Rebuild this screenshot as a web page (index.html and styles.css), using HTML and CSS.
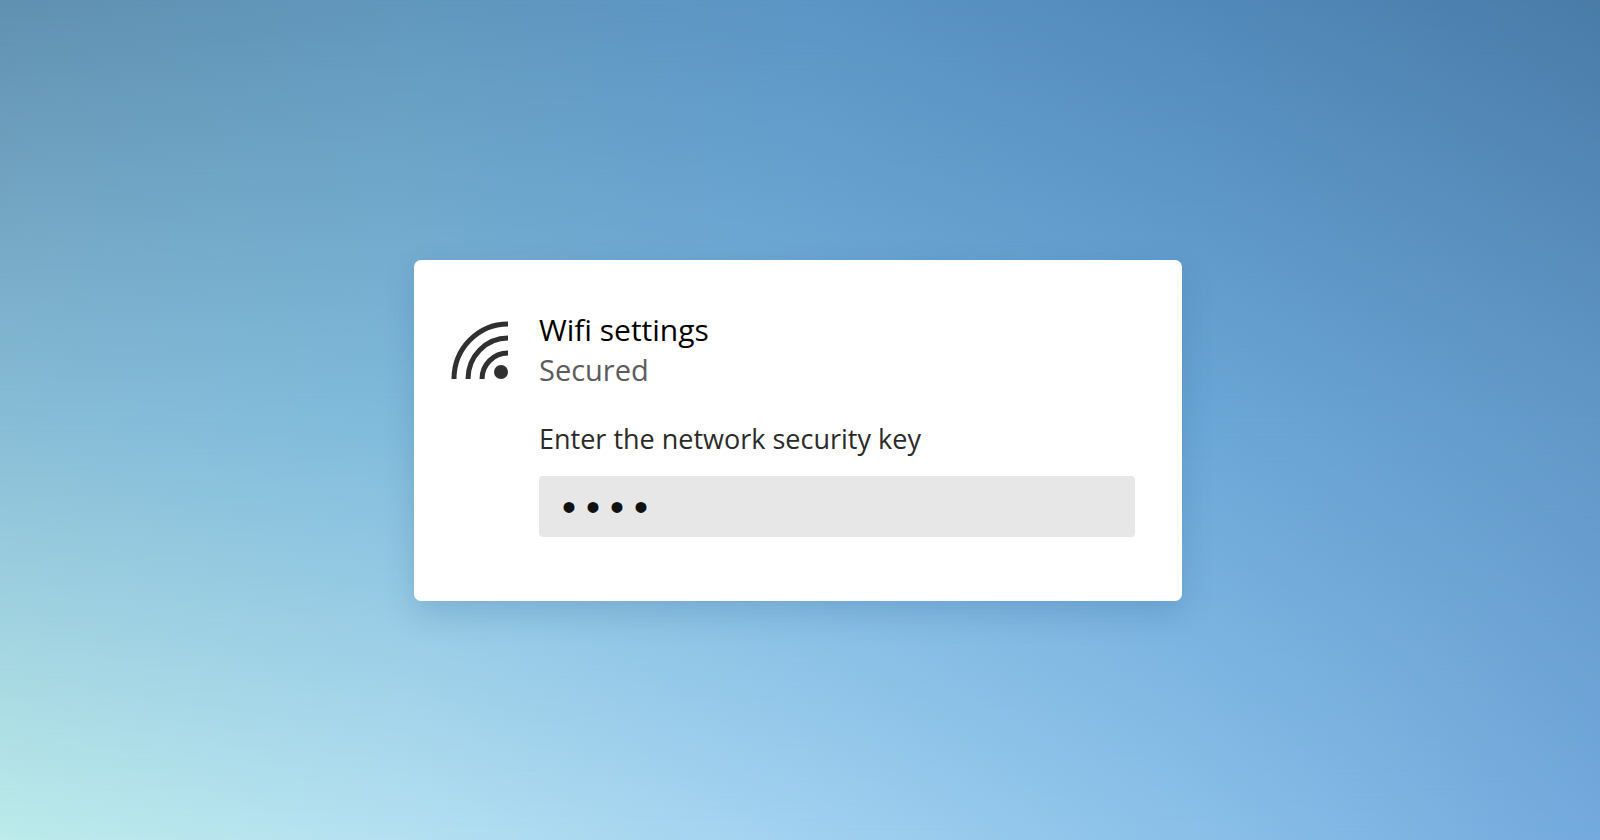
FILE: index.html
```html
<!DOCTYPE html>
<html lang="en">
<head>
    <meta charset="UTF-8">
    <meta name="viewport" content="width=device-width, initial-scale=1.0">
    <title>Wifi settings</title>
    <link rel="stylesheet" href="styles.css">
</head>
<body>
    <main class="desktop">
        <form class="wifi-card">
            <svg class="wifi-icon" viewBox="0 0 57 58" aria-hidden="true">
                <path d="M3 58 A54 55 0 0 1 57 3"/>
                <path d="M17 58 A40 41 0 0 1 57 17"/>
                <path d="M31 58 A26 26 0 0 1 57 32"/>
                <circle cx="50" cy="51" r="7"/>
            </svg>

            <div class="wifi-content">
                <h1 class="wifi-title">Wifi settings</h1>
                <p class="wifi-status">Secured</p>
                <label class="key-label" for="securityKey">Enter the network security key</label>
                <input class="key-input" type="password" id="securityKey" value="1234">
            </div>
        </form>
    </main>
</body>
</html>
```
FILE: styles.css
```css
* {
    box-sizing: border-box;
}

body {
    margin: 0;
    font-family: "Segoe UI", "Open Sans", "Noto Sans", sans-serif;
}

/* Sky background: middle row of colours, top and bottom rows faded in */
.desktop {
    position: relative;
    isolation: isolate;
    display: flex;
    align-items: center;
    justify-content: center;
    min-height: 100vh;
    padding: 20px 4px 0 0;
    background: linear-gradient(to right, #88bdd7 0%, #80bbdc 25%, #76b1dc 50%, #6ba7d8 75%, #6198c8 100%);
}

.desktop::before,
.desktop::after {
    content: "";
    position: absolute;
    inset: 0;
    z-index: -1;
}

.desktop::before {
    background: linear-gradient(to right, #6090b0 0%, #6197bc 25%, #5b95c5 50%, #5189ba 75%, #4a7ba7 100%);
    mask-image: linear-gradient(to bottom, #000, transparent 50%);
}

.desktop::after {
    background: linear-gradient(to right, #bcebea 0%, #b4e0f1 25%, #a1d1f0 50%, #8ac0e8 75%, #73a9dd 100%);
    mask-image: linear-gradient(to top, #000, transparent 50%);
}

.wifi-card {
    display: flex;
    align-items: flex-start;
    gap: 31px;
    width: 100%;
    max-width: 768px;
    padding: 50px 47px 64px 37px;
    background-color: #fff;
    border-radius: 7px;
    box-shadow: 0 12px 32px rgba(30, 80, 130, 0.2);
}

.wifi-icon {
    flex-shrink: 0;
    width: 57px;
    height: 58px;
    margin-top: 11px;
    fill: none;
    stroke: #303030;
    stroke-width: 5;
}

.wifi-icon circle {
    fill: #303030;
    stroke: none;
}

.wifi-content {
    flex-grow: 1;
    display: flex;
    flex-direction: column;
    min-width: 0;
}

.wifi-title,
.wifi-status,
.key-label {
    margin: 0;
    font-weight: 400;
    line-height: 40px;
}

.wifi-title {
    color: #000;
    font-size: 30px;
}

.wifi-status {
    color: #5c5c5c;
    font-size: 29px;
}

.key-label {
    margin-top: 29px;
    color: #2b2b2b;
    font-size: 27px;
}

.key-input {
    width: 100%;
    height: 61px;
    margin-top: 17px;
    padding: 8px 18px 0;
    border: none;
    border-radius: 4px;
    outline: none;
    background-color: #e7e7e7;
    color: #111;
    font-family: "Liberation Mono", monospace;
    font-size: 40px;
}
```
